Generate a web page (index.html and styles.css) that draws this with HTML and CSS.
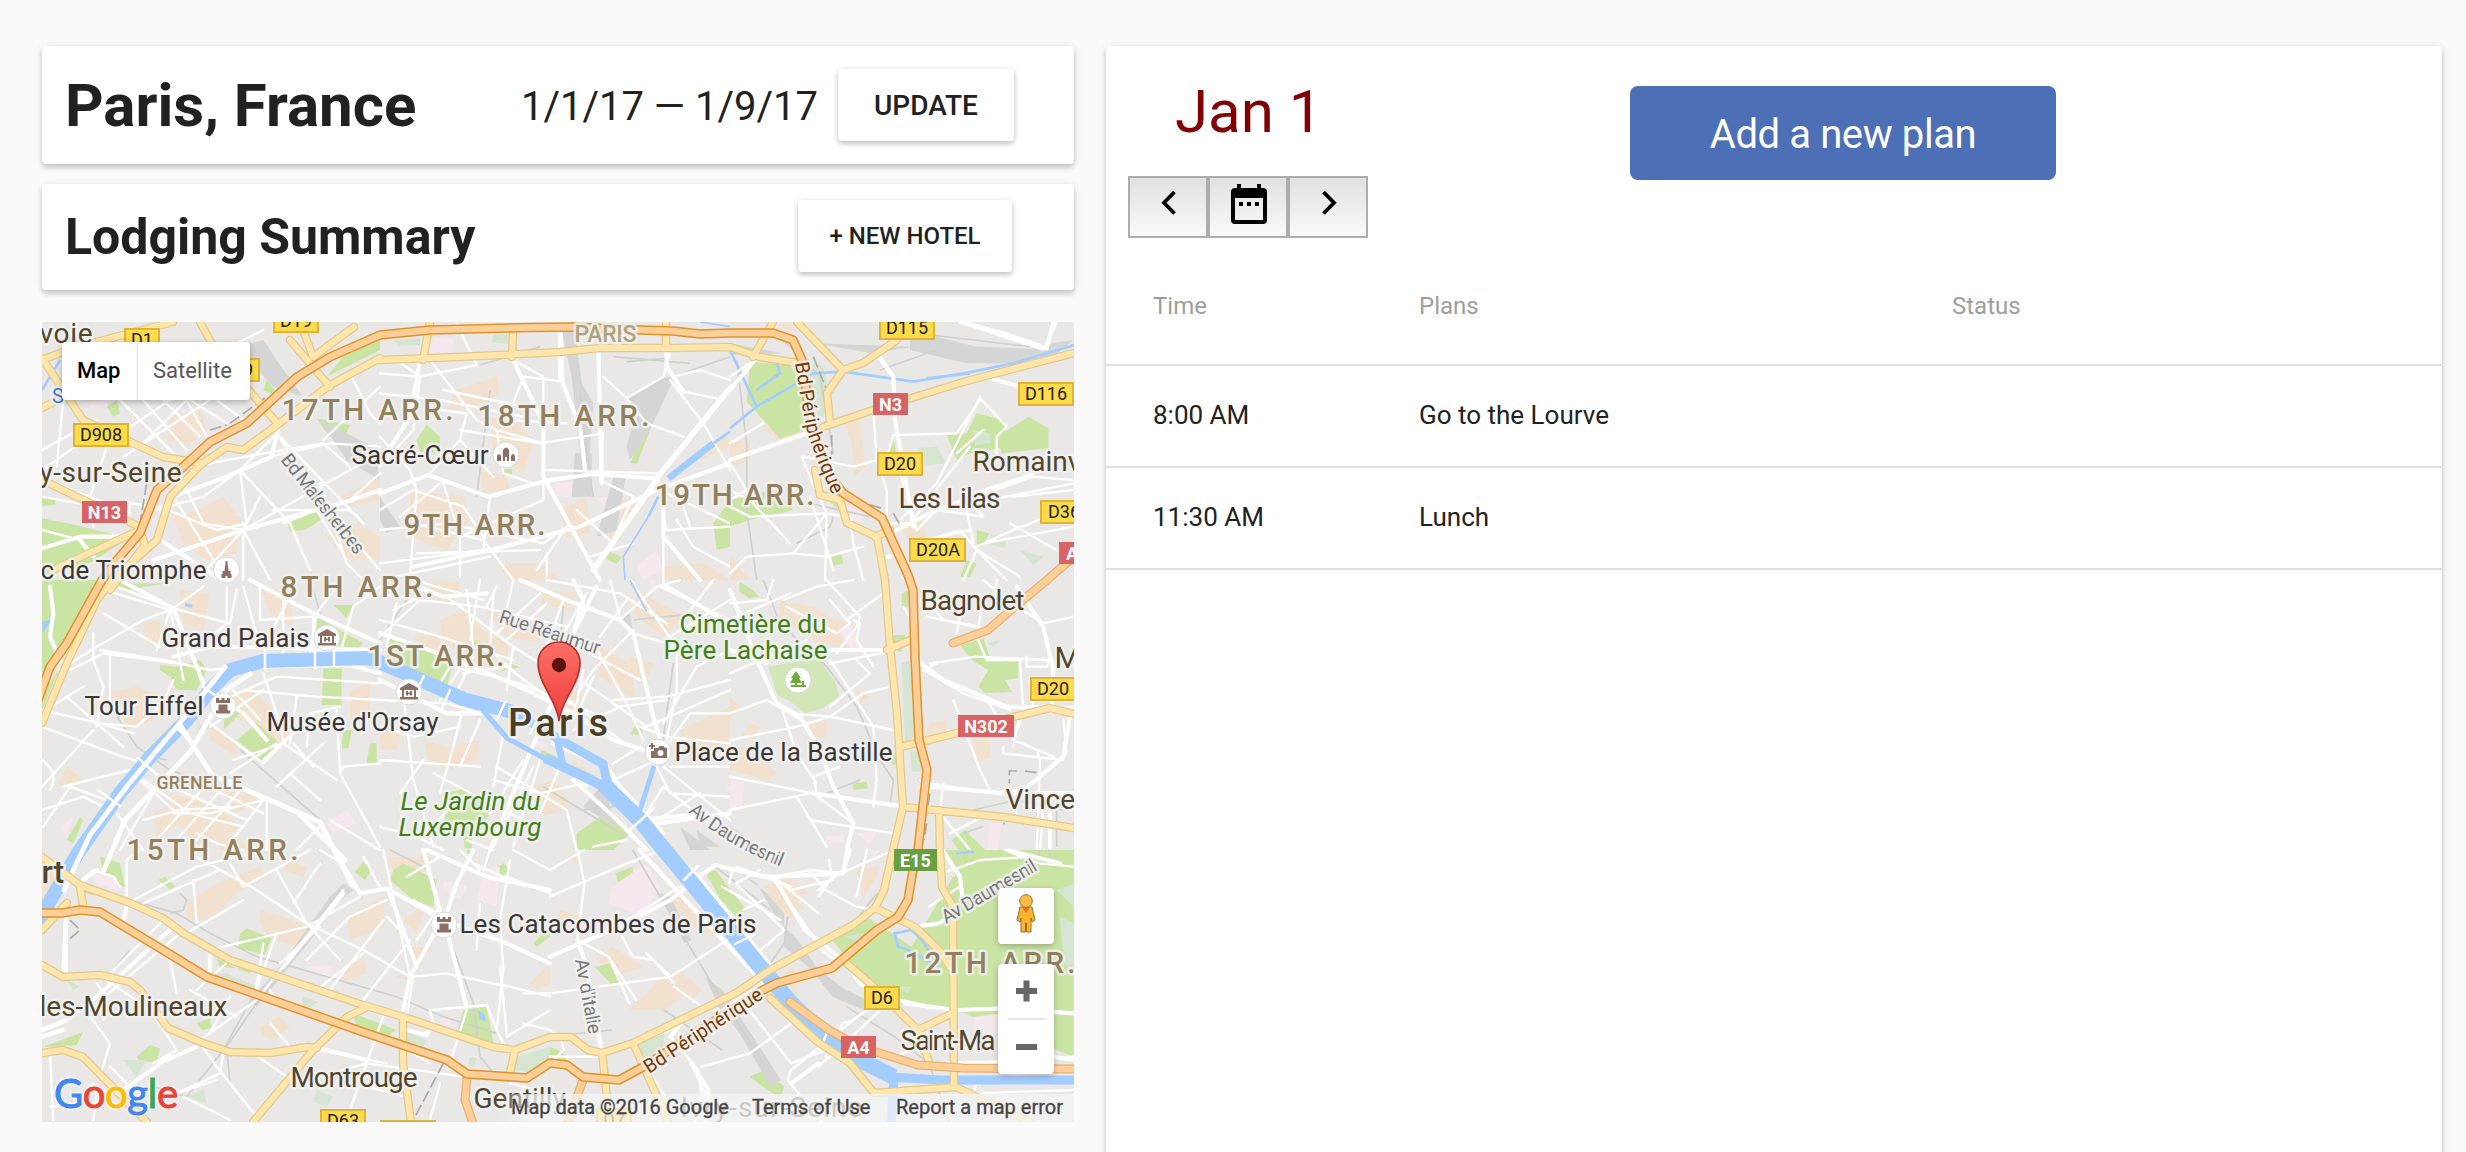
FILE: index.html
```html
<!DOCTYPE html>
<html lang="en">
<head>
<meta charset="utf-8">
<title>Paris, France</title>
<link rel="stylesheet" href="styles.css">
</head>
<body>
<main class="page">
  <section class="left">
    <header class="card trip">
      <h1>Paris, France</h1>
      <span class="dates">1/1/17 — 1/9/17</span>
      <button class="btn update">UPDATE</button>
    </header>
    <header class="card lodging">
      <h2>Lodging Summary</h2>
      <button class="btn hotel">+ NEW HOTEL</button>
    </header>
    <div class="map">
      <svg class="canvas" viewBox="42 322 1032 800" width="1032" height="800">
        <defs>
          <g id="castle"><circle r="13" class="disc"/><path d="M-7-8h3v2h2.500v-2h3v2h2.500v-2h3v5h-14zM-4.500-1.500h9v6h2.500v3h-14v-3h2.500z"/></g>
          <g id="museum"><circle r="13" class="disc"/><path d="M0-9 9-4v2h-18v-2zM-7-2h2v7h10v-7h2v7h2v2.500h-18v-2.500h2zM-3-1h2v1.500h2v-1.500h2v4.500h-2v-1.500h-2v1.500h-2z"/></g>
          <path id="arterial" d="M380 358L330 385 277 425 243 450 227 447 200 465 170 497 157 540 112 580 97 600 67 663 42 723M380 360L457 357 560 352 600 348 667 348 730 347 760 357 797 363M815 470L820 495 840 500 847 523 877 537 885 580 890 647 897 713 903 807 893 850 884 890 875 908 853 925 770 970 736 993 633 1043 602 1053 588 1050 571 1037 550 1037 515 1050 493 1047 407 1018 363 1005 230 960 183 933 163 918 130 903 80 885 42 857M1074 353L963 382 873 410 823 427M797 322L843 370 827 393 830 423M843 370L863 363 897 340M900 747L917 743 957 733 1013 717 1050 708 1074 714M903 807L1003 817 1074 828M939 810L940 850 942 887 953 907 954 1083M875 908L915 927 939 950 950 967M843 960L874 987 918 1030 953 1013M918 1030L930 1065M770 998L819 1043 850 1063 874 1093 956 1087 1005 1110 1030 1122M633 1043L660 1103 668 1122M602 1053L607 1097 610 1122M887 650L910 640M42 965L63 977 100 975 130 982 140 990 168 1028 203 1043 230 1052 270 1053 307 1047 317 1048M367 1007L347 1017 313 1050 253 1122M403 1020L403 1063 411 1122M42 1053L63 1050 83 1057 147 1122M515 1050L510 1073M80 887L83 905M42 930L67 903M42 360L73 348 173 322M42 408L80 388M42 358L83 420 163 457 200 463M200 322L217 353 277 423M290 340L330 387M354 327L313 357 303 330M42 480L140 527M430 322L423 360M513 333L512 357M666 322V348M773 322L753 357M875 537L890 530M52 570L140 530 145 545 110 590"/>
          <path id="motorway" d="M953 643L988 630 1017 605 1047 580 1078 553M790 1002L829 1030 860 1047 918 1065 963 1068 1078 1069M467 1077L465 1100 474 1126M583 1080L567 1126"/>
          <path id="ring" d="M38 700L50 667 67 643 102 580 117 560 140 533 157 490 182 468 210 442 247 423 297 377 330 357 380 335 430 330 530 327.500 573 327 640 330 673 331 700 334 730 333 773 333 793 340 802 360 808 403 813 427 825 470 843 493 882 518 908 575 913 590 915 657 919 740 927 770 918 850 913 870 908 900 898 917 877 930 832 968 777 983 763 990 643 1067 619 1080 583 1077 567 1065 550 1063 527 1078 467 1074 447 1060 363 1032 207 977 163 950 100 912 80 910 62 913 36 913"/>
        </defs>

        <!-- north-west -->
        <g transform="translate(30 310) scale(.33333)">
          <path class="t" d="M420 320l90-20 20 60-60 50-60-20zM430 620l110-30 90 30-10 110-90 20-70-50zM520 590l60-30 40 50-50 30zM890 680l90-40 70 40v70h-100zM930 560l120-60v70l-90 20zM320 190l60-30 40 40-60 30z"/>
          <path class="g" d="M36 625l100 20 160 40-110 70-150 50zM770 630l90-28 25 20-60 38-45 4zM860 325l100 20-30 70-50-60zM700 240l60 30-50-60zM940 140l110-60v40l-160 80zM230 290l30-20 10 40-20 10zM36 560l40 10v14l-40 4z"/>
          <path class="r" d="M620 110l80-20 60 90 60 80-90-30zM870 330l160 80 20 100-100-60z"/>
          <path class="k" d="M160 280l70-10 5 15-50 10z"/>
          <path class="v" d="M36 240L90 150M230 95L330 62 420 40"/>
          <path class="w" d="M230 400L520 200M280 440L600 230M340 400L470 270 530 380M270 270L430 430M330 260L470 420M400 270L510 380M560 270L640 330M480 270L590 340M100 270l-20 200M230 410L180 560 190 650M150 400L36 480M370 130L510 270M300 70L500 180M36 420L200 330M620 100L700 60M80 520L300 610M630 480L740 370 800 460 860 560 1050 780M630 480L520 560 380 600M630 480L780 640 840 780M630 480L650 640 560 660 390 590M430 560L590 810M640 660L870 530 1050 430M430 480L700 430 880 400 960 470M740 370L1000 640M870 520L950 760 1000 810M960 570L1050 490M690 560L640 660 720 810M760 640L860 600 950 750M640 660L640 810M640 660L500 810M450 500L520 640 640 660M720 440L900 400 1050 410M960 190L1020 310 1050 340M880 390L1050 230M36 660L150 690M290 640L300 580 380 590M36 560L250 600M730 600L960 600"/>
          <path class="m" d="M36 715L150 680 290 680M640 660L960 572 1050 540M745 350L725 440 590 500 430 560M640 660L370 750M390 690L560 800M150 690L190 740M600 120L690 200"/>
          <path class="d" d="M600 340L710 260M350 520L330 640M540 360l50-15"/>
        </g>
        <!-- north -->
        <g transform="translate(380 310) scale(.33333)">
          <path class="t" d="M230 240l120-40 10 50-70 40-90 10zM330 320l90 20 40 60-30 90-90-50zM90 540l160 20 20 70-70 90-110-40zM540 600l80-40 10 110-70 10zM690 580l80-20-10 70-50 70-50-40zM300 480l80 20 10 40-80 10zM360 760l120 0 60 50h-160zM850 770l120-10 80 50h-200zM940 430l100-60 10 40-90 40z"/>
          <path class="g" d="M110 390l30-45 40 35v50l-60-5zM790 362l18 5-38 95-18-3zM370 480l28-4-4 20-26 2zM690 725l35 15-15 22-32-15zM1000 640l50-70v140l-40 10z"/><path class="gg" d="M40 90l80-5v20l-60 2zM340 75l45-3v30l-50-6z"/>
          <path class="k" d="M160 85l60 0v40l-70 5zM520 520l65-8-8 50-50-4zM650 565l40-6-20 30zM770 770l60-50 20 60-60 30z"/>
          <path class="r" d="M545 60h40l20 160 35 60-10 150-30 0-25-230zM850 200l30 10-70 150-60 90-10-40 30-120-30-30zM585 430h50v130h-60zM700 500l40-20-30 180-60 20zM0 560l60 90-40 20-20-40z"/>
          <path class="rl" d="M600 250L630 500M620 440L640 560M850 210L1050 140M700 140l230 20M740 155l120-10M300 165L480 110M290 560L330 240"/>
          <path class="w" d="M0 190L120 200 290 165 230 40M0 250L180 270 430 320M50 150L120 200 100 360 0 470M150 150L290 330 350 360 490 400M490 570V200L400 150M430 200L380 330M430 200L550 215 545 60M190 240L480 300M240 360L480 400 670 370M180 300L260 310 240 390 340 500M600 340L620 490M500 480L830 490M670 200L740 265 850 200 870 130M740 265L800 340 910 380M870 210L970 340 1050 480M880 200L960 180 1050 210M910 245L1010 265M850 620L860 660 1050 650M860 550L1050 640M0 380L90 480 110 540 90 800M0 600L100 540 250 590 310 680M190 520L240 680 240 800M330 560L310 720 0 760M490 700L560 650 470 780M350 360L370 490 460 520M850 820V560M700 690L760 560 660 510M630 740L760 700M930 650L900 560M890 630L940 710 1050 770M60 620L180 520M0 660L200 640 490 700M400 810L310 690 100 640M240 680L490 570M110 730L480 720M500 730V800M590 600L700 700M380 330L560 340M240 390L150 490M0 810L330 740"/>
          <path class="m" d="M0 550L145 495 325 560 500 512 640 492 830 505M395 140L490 340V500L660 810M540 50V200L600 350 615 480M655 120L665 520 665 370M100 770L330 720 600 650 830 540 1050 460M860 120L860 170 910 245M120 150L90 320 20 430M850 540L850 680 960 810"/>
          <path class="b" d="M830 505L1050 235M830 510L640 780"/>
          <path class="v2" d="M865 505L1000 400"/><path class="v" d="M1000 400L1050 365M835 560L805 620"/><path class="vt" d="M805 620L730 740 735 810M960 36L1050 50"/>
        </g>
        <!-- north-east -->
        <g transform="translate(730 310) scale(.33333)">
          <path class="t" d="M330 310l60 20 15 140-30 30-10-100zM100 360l110-40 10 60-70 10zM0 740l60 70H0zM510 650l60-40 20 80-50 10zM140 40l50 0v30zM0 400l60-10v60L0 470z"/>
          <path class="g" d="M60 155l120 10 40 70 20 120-90 30-100-110zM650 375l60-5 30-60 80 20 20 80-120 20-40 20zM800 380l50-30 45-30 60 35v60l-140 15zM740 660l38 10-20 40-18-4zM690 800l20-50 30 10-20 40zM305 740l30-6 5 26-30 8zM0 570l130-30 60 60-130 30-60 20zM490 375l10 60-30-10zM270 545l60 0-10 50z"/><path class="gg" d="M230 150l50 20 20 80-20 70-40-20zM560 415l60-5 30 50-60 5zM730 360l50 10 5 30-50 5zM780 670l50 20-5 25-40-10zM870 720l70 20-30 25zM380 370l10 80"/>
          <path class="k" d="M340 580l60 30-20 40-40-10z"/>
          <path class="r" d="M540 60l200 50 250 10-80 40-200 0-170-40zM250 100l300 10-120 20zM0 100l160 30-150 5zM900 110l130-20-70 60z"/><path class="rl" d="M20 150L50 400 50 600 80 810M560 70L900 110M450 180L620 120M120 50L270 200 310 430M200 700L300 650 310 620M240 580L420 620"/>
          <path class="v" d="M0 355L80 290 250 190 340 185 550 215 700 190 850 160 1032 105M0 120L80 290M80 240L150 190 140 160"/><path class="v" d="M590 205l130-15"/>
          <path class="w" d="M0 400L100 340M215 440L240 500 290 610 190 730 50 740 0 790M0 590L60 620 290 610 350 620M190 730L290 740 400 710M290 610L285 810M0 540L60 570 180 700M360 620L370 700 400 810M430 300L440 450 370 470 220 440M440 450L470 540 470 640 540 640M490 380L460 470M490 375L680 370 750 270M510 630L620 520 750 260M750 265L830 350 800 380 800 430M680 430L760 360M530 530L560 660 620 600 760 620 700 560 940 480M620 600L1032 520M540 640L720 410M900 500L1032 510M560 700L690 660 740 720 700 810M590 690L720 660M740 710L850 660 1000 600M740 720L870 800M700 550L730 700M700 40L940 120 980 40M1032 540L850 560M760 700L1032 650M840 640L980 720M240 560L310 780M0 200L60 160M0 460L50 540 0 570M500 450L530 560M740 720L830 810"/>
          <path class="m" d="M440 130L490 200 495 330 515 440 550 650M0 450L230 370M500 660L620 600 900 500M780 205L870 230M690 36L820 70 950 115 970 40M0 240L70 155M480 740L440 740"/>
          <path class="d" d="M250 140l40 100M305 375v60M490 610l20 35M375 570l80 25"/>
        </g>
        <!-- west -->
        <g transform="translate(30 580) scale(.33333)">
          <path class="t" d="M230 340l90-20 80 30-30 70-80 30-20-70-60 0zM600 340l70-10 70 70 50 80-70 0-130-90zM450 30l90 10-20 110-60-20zM690 20l90 20 10 100-70-40zM960 340l60-40v120l-60 10zM540 440l80 40 0 50-80-50zM420 640l150 40 60 60-110 70-90-90zM110 560l50 40-80 20zM370 700l70-40 20 60-80 60zM540 770l90 0 20 40h-80zM570 630l120 20-70 50zM340 130l50-10 10 70-50 10z"/>
          <path class="g" d="M36 0h170l-90 160-80 120zM390 255l50 5 70-20 20 30-30 60-60 0-20-40-30-20zM590 350l50 40-60 60zM620 480l60-50 75 65-55 50zM860 110l140 80-30 30-110-60zM880 265h55v110h-60zM940 450h25l-10 55h-20zM1020 490h20v60h-30zM150 710l-40 70 20 10 30-70zM36 340l50-70-50 120zM910 75l60 0-20 40zM220 10l190 0-120 20z"/><path class="gg" d="M500 440l40-20 15 20-40 20z"/>
          <path class="k" d="M890 730l60-40 30 40-70 30zM90 740l40-30-20 60z"/>
          <path class="vf" d="M36 125l30-6-28 40zM466 70l22 4-2 9-22-4z"/>
          <path class="rl" d="M235 370L320 500 420 570 480 590M630 510L870 720M840 0L920 260M360 530l50 10"/>
          <path class="w" d="M190 20L420 90 380 210M220 100L390 200M260 20L430 85 600 130M420 80L460 300M430 85L520 20M420 90L340 120 200 200 90 270M590 20V130L530 180M620 30L600 130M640 20L690 200M120 270L220 220 440 250M190 160V240L220 320 200 440M36 390L210 430 310 460M210 430L320 440 400 370 430 300M110 350L280 500M36 440L250 520 340 550M210 210L400 240 540 270 630 260M240 230L240 400M36 620L190 450M100 620L340 560M690 20L690 120 850 110 850 220M700 200L780 50M760 230V20M930 220L970 80 1050 20M600 320L690 420M540 440L700 330M600 350L740 290 1050 310M640 330L860 350 1050 360M800 350L780 490M700 280L740 400 760 480M540 430L700 550M700 550L850 400M610 540L760 490 920 600M600 580L740 490M700 540L830 420M780 580L870 660M740 620L880 490M930 580L940 560 1050 550M920 380L930 580 1050 800M830 500L840 400 930 380M340 600L480 700 640 740M430 690L330 600M370 640L270 810M400 610L650 720M490 600L700 700M550 590L380 780M600 600L430 790M640 620L500 780M700 660L600 790M340 720L450 690 600 680M260 700L340 810M500 760L560 790 640 810M710 660V810M36 690L160 650 240 690M36 540Q90 580 60 630M40 740L120 620 230 660M36 400L110 350 160 320M430 700L540 700 700 660M870 740L800 810M900 720L1050 810M790 490L850 560M920 20L860 100 840 220"/>
          <path class="m" d="M270 0L430 85 520 310M60 20L70 100 60 170 90 240 110 260M660 0L850 100 1050 190M430 230L580 190M640 260L960 255 1050 280M560 200L1050 210M520 310L640 400 710 480"/>
        </g>
        <!-- centre -->
        <g transform="translate(380 580) scale(.33333)">
          <path class="t" d="M180 120l80-30 50 60 80 40-20 80-80-20-100-60zM310 80l150 50 20 60-100-20zM640 190l110 60 20 110-110-70zM770 30l140 80-60 60-90-70zM200 500l100-20-10 60-80 20zM0 440l70 10-20 60H0zM460 620l60-20 60 80-90 30zM540 320l80 30-50 60zM900 450l150-70v120l-120 30zM750 230l70 20-20 60-60-40zM580 540l70 50-80-20zM100 170l60-10 60 70-40 20zM160 0l80 10-20 60-80-10zM500 30l90 10-20 50-90-20zM130 480l70 20 20 70-70-20z"/>
          <path class="g" d="M30 170l30 5 160 75-20 70-180-70zM280 178l25 10 40 70-55-20zM195 640l60-15 40 20 30 50 0 20-50 20v70h-20l-10-60-50-10zM590 760l100-70 60 70-50 50h-110zM765 438h20v28l-32-4zM485 510l45 20 0 20-50-18zM390 250l30 12-60 12z"/>
          <path class="k" d="M460 480l30 5 0 20-30-5zM800 0h30l-10 20zM1040 620l10-5v30z"/>
          <path class="r" d="M900 740l40 30 50 40h-60zM950 750l70 50h-60zM670 610l-60 70 100 60zM720 110l40 60-10-70z"/>
          <path class="rl" d="M490 620L740 770M610 690L700 680 660 600M880 250L840 550M0 180L120 0M550 80L540 180M760 120L950 100"/>
          <path class="w" d="M0 40L120 60 300 80 560 140M50 70L20 200M260 30L280 200 180 360M300 0L270 180M340 40L330 210M0 120L180 170 400 240M120 60L0 170M200 50L400 200 480 250M100 0L310 60M480 40L350 160M550 60L500 200M400 0L370 130M500 70L380 180M350 20L320 80M240 210L180 310M280 230L220 360M220 260L420 310 640 400M400 200L380 330M250 280L380 260 540 380M0 360L200 370 300 400M70 340L100 600 160 800M250 380L220 500 180 640M300 420L240 560M370 460L340 620M0 540L300 560M0 440L100 470 240 440M480 540L400 800M460 560L340 800M430 540L330 700M540 560L480 700M130 540L60 640M0 740L110 770 190 810M160 580L350 680 430 720M350 560L560 690 590 810M620 620L560 560M340 600L480 640 610 610 690 630M600 380L640 290M580 450L720 380 860 360M540 340L720 480M600 300L800 440 1050 330M610 270L580 420M640 190L740 370 790 480M700 360L860 350 1050 300M760 150L640 270 600 330M780 300L590 200M720 120L830 20 900 0M620 40L540 180M690 0L720 110M870 170L1050 60M760 160L890 200 890 340M880 190L820 100 750 0M890 330L850 530M850 430L950 260 1050 210M870 560L1050 560M850 560L1050 720M830 540L930 400 1050 400M830 560L870 640 1050 650M700 600L830 540M500 0L720 40 860 130M700 550L780 500M800 700L850 620 1050 780M780 440L860 470 1050 490M100 60L40 90M330 210L430 300M270 200L260 260M840 20L1050 120M900 130L1000 0M640 800L740 780M740 60L660 170M800 740L960 640M240 650L140 760M260 780L340 810"/>
          <path class="m" d="M0 160L120 200 280 260 440 330 580 400 700 480 820 520M0 300L200 400 320 400M580 0L610 60 520 360 470 470 400 640 330 810M420 0L560 60 720 120 760 160 820 410 850 510M520 490L680 560 720 620 850 760M580 600L690 700 800 810M650 20L540 240M800 735L1050 700M780 720L980 700M320 40L190 50 110 20M860 20L1050 130"/>
          <path class="vt" d="M750 0L800 95"/>
        </g>
        <!-- east -->
        <g transform="translate(730 580) scale(.33333)">
          <path class="t" d="M150 60l100 20 60 40 70 10-20 80-90-20-120-70zM600 430l50-10v40l-40 10-30 10zM730 480l50-5 0 60-40 10zM0 500l70 0 70 80-30 20-110-30zM60 430l30 10-20 40-40-5zM230 440l60-20 0 50-50 10zM370 320l50 30-30 20zM0 350v60l40-20z"/>
          <path class="g" d="M28 5l40 25 20 20-30 5-30-20zM690 195l70-20 25 70 80-10v60l-40 5 20 35-80 5-20-20 30-50-50-30zM485 165h40l-10 50h-30zM515 40l20-10v50h-20zM370 610l40-5 5 20-45 5zM665 780l40-30 60 60h-80zM485 520l15-4-2 40-14-4z"/><path class="gg2" d="M115 260l80-15 70-10 50 70 12 45-50 35-50 15-45-35-40-20z"/><path class="gg" d="M515 250l30-10 10 230-30 20zM540 515h25l10 60h-30zM770 190l40-10-20 20z"/>
          <path class="k" d="M330 160l30-30 30 60-20 30zM0 600l45 5-10 80H0zM780 730l35 0-10 80h-35zM380 760l60-5-20 40zM290 770l50-5v20l-50 5z"/>
          <path class="rl" d="M100 0L150 130 290 260 380 380 450 540 490 600 480 680M0 740L100 810M390 600L290 640M730 690L860 660 1000 690M700 760L760 740M920 700v110M980 690v110"/>
          <path class="w" d="M0 70L110 60 130 0M180 40L0 120M160 60L260 20 370 0M170 80L320 160 360 130 300 60M290 0L390 110 380 140 320 220M350 120L460 40M370 120L390 130 380 180 430 260M0 280L230 180M0 400L110 360 180 400M150 370L200 520 260 610M0 480L200 440 300 410 400 340 480 320M230 430L180 400 300 410 490 450M300 250L500 210M380 240L420 280 300 380M300 240L340 300 430 440 440 600 430 680M0 590L250 640M260 640L250 590 330 560M250 640L370 730 350 810M200 650L290 800M240 720L490 760M0 690L240 640M520 80L550 130M580 50L640 120 750 140M700 60L680 160M590 110L780 150M760 60L740 170 770 240M600 250L740 230 950 240M770 240L870 240 880 400M760 0L830 60 940 130 1032 110M890 230L890 260 950 260 960 230M670 360L750 570 780 630M770 360L810 420 940 380M820 500L820 520 1000 540M600 610L790 640 870 640M630 700L720 810M660 760L760 710M880 400L850 480 970 530M870 400L850 500M920 510L930 540 920 810M1000 420L1010 520 870 640M570 600L600 620V700M640 610L630 690M860 630L780 640M830 640L860 700M940 680L930 810M900 300L910 380M580 270L700 340 840 390M600 260L620 250 600 250M800 0L790 90"/>
          <path class="m" d="M0 30L90 260 140 370 210 410 270 510 310 620 370 730 350 810M280 210L470 210M110 250L0 210M560 240L640 300 830 380 1032 385M860 20L940 140 970 270 965 390M250 640L520 680M600 620L830 640 1032 640M1020 410L1000 530 870 640M960 700V800"/>
          <path class="d" d="M860 573h-22v37M885 573l35 5M600 640l-6 40M590 730l-8 50M820 730l5 0"/>
        </g>
        <!-- south-west -->
        <g transform="translate(30 850) scale(.33333)">
          <path class="t" d="M470 160l90-60 130-50 20 30-90 50-80 80-70 0zM690 180l70 20 100 40-50 50-90-20-30-50zM690 530l60-30 30 30-50 40-30-10zM950 200l110-60v90l-100 40zM1120 210l70-50-30 90zM1140 290l70 0-60 60zM940 350l60-30 10 50-80 30zM1080 20l130 0-30 50-110-20zM40 20l50 20-20 120-34 10zM770 30l60 20-10 30-60-20zM1500 400l60-60v60l-40 20zM1100 380l50-20 0 40z"/>
          <path class="g" d="M1090 60l30-20 100 50-10 80-60-20-70-60zM630 250l20-15 75 30-20 50-80-20zM560 325l60 30-50-5zM620 340l60 0-20 30-30-10zM975 65l25-30 25 25-20 30zM1300 480l70-10 20 110-110-30zM970 490l130 50-30 20-90-30zM40 590l120-45-20 40-60 5zM320 620l40-35 30 10-10 40-50 0zM210 20l60 20 15 70-60-10zM385 90l20-10 30 30-15 8zM500 520l40-15 5 30-30 5zM160 110l60 30-60-10zM1390 60l30-20 20 20-40 30zM1310 0h20l-10 30zM1510 280l50-50v30l-40 30z"/><path class="gg" d="M540 370l50 0 90 40-10 10-90-20zM1120 540l70 30-10 20-60-15zM820 440l45 15-30 20-20-15zM1460 620l100-30v40l-50 40-60-10zM110 390l40 20-20 10zM860 720l50 20-20 30-40-15zM470 740l50-20 10 40zM1320 620l20 5-5 25-20-5zM280 630l70 0-30 50z"/>
          <path class="k" d="M180 60l80 20 0 40-60-15zM1240 90l70 20-20 40-50-30zM1360 60l50-10-10 120-60-20zM820 350l80-5 30 40-40 0zM1235 500l30 0-5 25-25-5z"/>
          <path class="vf" d="M1345 480l20 15 2 20-18-8zM674 275l10 2v4z"/>
          <path class="r" d="M900 140l40-40 30 20-60 50-60 90-80 100-90 110-20-20 90-100z"/>
          <path class="rl" d="M300 150L440 190 540 250 680 320 1100 440 1240 500 1400 550M680 420L580 600 470 740 370 710M1200 60L1080 0M1250 240L1330 460 1350 620 1400 680M700 430L590 590 600 700M230 380L300 300M450 130l20 20-10 30-40 10"/>
          <path class="w" d="M310 150L500 50 700 0M290 150L290 30 330 0M340 160L570 60M480 10L680 120 830 220 1000 300 1140 380M490 90L500 220M600 40L640 110 840 0M740 60L830 220 930 330M640 150L470 250M540 300L830 230 990 140M790 160L870 40M750 340L870 230M830 330L960 200 1070 150M900 420L1060 210M1070 200L1110 240M1000 450L1140 270M860 420L1000 310M420 330L440 430M110 180L110 370M500 420L600 330M400 210L240 370M450 250L200 460M700 360L740 250M700 280L680 420M720 420L740 460M600 440L540 550M480 420L620 500M230 390L360 480 440 600 370 640M200 400L230 440 220 510M180 500L240 580 210 680M160 90L190 60 250 80 270 110M510 570L680 450 940 120M510 580L560 650 680 800M580 610L570 670 420 740M820 580L870 600 1070 640M780 590L720 520M670 610L770 680M870 680L1010 640 1300 680M960 780L1060 500M1150 150L1240 200M1000 20L1050 110M1060 0L1110 240 1140 380M920 30L870 0M1250 370L1150 380M1250 370L1430 410M1350 160L1340 300M1440 30L1410 210 1420 360 1400 540M1430 80L1560 130M1410 350L1430 550M1480 430L1560 430M1400 400L1560 440M1210 480L1370 465 1400 540 1430 600M1310 480L1260 640M1430 560L1560 480M1480 520L1560 540M1130 500L1150 380M1230 20L1130 80M1290 0L1350 60M1450 0L1560 60M1330 40L1440 90M1130 600L1200 640M970 700L1130 740M1230 700L1200 810M440 730L560 690M60 610L70 810M200 720L190 810M460 740L600 810M1440 700L1560 730M60 770L140 760 190 700M240 650L290 700M1160 270L1230 170M1200 480L1210 520M1360 60L1380 0"/>
          <path class="m" d="M36 540L110 510 200 440 430 230M110 160L100 370M290 160L280 230M200 60L160 90M420 620L280 720M930 30L990 130 1070 115 1240 210M1120 480L1140 380 1230 220M1075 120L1160 350M1240 220L1280 100 1330 0M1240 210L1430 280 1560 340M1250 240L1310 470M540 290V370M870 595L1010 630M1130 540L1190 555 1200 535M1180 0L1240 220M410 630L500 590M36 560L100 540M690 360L680 420M1190 0L1370 80 1560 120M940 130L760 350"/>
          <path class="d" d="M1240 640L1150 810M120 210l30 30-40 35"/>
        </g>
        <!-- south-east -->
        <g transform="translate(550 850) scale(.34444 .33333)">
          <path class="t" d="M620 110l70-30 60 50-40 20 30 20-50 40zM340 130l50 0 90 130-50-20-80-80zM320 380l60-20 30 60-80 60-100 0 60-60zM250 60l30-20 20 40-30 30zM30 180l60 20-80 20zM400 380l40 40-30 30-70-50zM440 130l50 20-30 20zM680 370l30-20 10 110zM890 60l60-10v30l-40 60zM180 290l90 60-60 20-80-40zM40 30l40-20 0 30z"/>
          <path class="g" d="M450 70l30-10 60 80 30 40-30 20-50-60-20-40zM1170 80l350-80v620l-340-140-220-20-140-190 100-70 130 90zM1180 0h342v100h-330zM190 70l50-20 0 100-30-10zM130 350l50-10 30 60-30 5zM580 680l40-20 60 50-10 30-40-20zM0 590l40 20 20 50-60-20zM1140 0h60l-20 80z"/><path class="gg" d="M1480 200l42 20v170l-30-60zM1470 120l52-20v70zM250 580l80-30v40l-60 40zM1010 410l40 0-10 20zM860 260l40-10 0 30z"/>
          <path class="k" d="M180 110l100-70 40 70-50 90-100-40zM1230 500l90-10v60l-90 0zM930 0l30 0-20 30zM1230 580l70 30-70-5z"/>
          <path class="r" d="M540 60l60 40 60 110 60 60 60 90 80 60 80 40-30 20-90-40-60-80-80-70 0-100-50-60zM320 130l30 10 60 130-20 10zM450 380l50 40 90 140 80 130-30 20-90-160-60-80z"/>
          <path class="rl" d="M480 50L640 180M240 0L400 280 470 400 620 640M690 200L680 280 640 340M950 130L880 220M0 560L180 540M330 480L500 600M1100 640L1160 816M860 470L1000 560 1100 640M1420 0v30M1450 0v30"/>
          <path class="v" d="M1050 240L1000 250 1010 290 1040 300 1130 350 1080 270 1050 240M1180 10l50-5"/>
          <path class="w" d="M0 60L100 0M0 140L200 50 300 10M80 260L100 100 80 0M80 270L170 320 250 450M0 320L160 250 240 200 470 50M0 430L350 380 530 260M200 240L240 320 300 330 360 400M350 380L280 310M170 320L230 460M360 410L440 470M520 100L530 60 650 80 760 60 850 70 860 0M610 60L540 100 680 240 600 310M420 110L600 330M500 110L670 210M750 60L800 120 890 170 940 180M660 90L700 120 820 90 810 30M650 90L790 300 850 350M540 50L620 80 700 110M780 140L820 80 1000 0M890 140L920 0M560 180L620 150M870 0L850 60 780 120M780 190L660 90M380 600L500 480 620 400M100 420L150 600M350 560L430 660 450 816M540 430L700 640 900 560M0 540L30 560 40 600 0 640M700 520L580 610 440 650M410 640L450 730 420 816M700 660L690 690 790 816M700 660L880 510 920 480M880 510L850 520 800 620M240 580L350 540 380 520M1240 690L1230 730 1522 720M1190 700L1522 650M1200 640L1522 620M1000 620L1100 580M780 650L960 480M240 580L340 750 350 816M1190 110L1100 170M1140 70L1250 30 1400 20M1320 0L1420 40 1522 50M150 620L0 620"/>
          <path class="m" d="M0 320L200 230 350 150 480 45M480 45L620 80 660 80 850 70 870 0M80 270L100 330 150 600M260 0L420 180 620 400M340 0L430 80 650 360M580 400L620 380M650 80L740 240 860 340 900 400 960 440 1100 470M1030 460L1180 480 1320 475 1522 490M1320 600L1522 630M1160 640L1310 640M1000 680L960 660 880 620M780 640L700 700M1060 230L1130 220 1180 190M350 560L380 520M1140 0L1190 80 1200 160M1330 0L1480 40M410 640L460 720 450 816"/>
        </g>

        <!-- the Seine and its canals -->
        <g class="river">
          <path stroke-width="14" d="M36 925L78 853 120 793 150 757 187 720 210 690 230 670 263 661 370 658 423 681 463 699 513 712"/>
          <path stroke-width="9" d="M513 712L557 738 603 764 608 786"/>
          <path stroke-width="5" d="M480 707L507 738 547 760"/><path stroke-width="7" d="M557 738L564 770"/>
          <path stroke-width="10" d="M545 758L587 778 610 790"/>
          <path stroke-width="16" d="M604 785L640 820 661 846 695 887 757 963 791 1003 832 1043 860 1060 894 1077"/>
          <path stroke-width="9" d="M890 1077L940 1080 1074 1080M894 1077L891 1122"/>
          <path stroke-width="5" d="M654 766L648 785 640 810"/>
        </g>
        <path class="bridge" d="M98 790l22 16M138 758l25 22M176 727l20 20M202 686l14 10M265 650v20M315 652v16M334 650v16M424 676l-8 16M450 690l-8 18M505 702l-8 18M536 722l-6 12M630 830l24-22M684 880l14-14M735 944l20-10M820 1050l8-20"/>
        <path class="b1" d="M64 890L90 835 128 785 178 725 225 667M104 870L125 820 190 752 226 690 250 674M180 725L212 775 320 822M320 822L352 885M345 860L300 815"/>

        <!-- arterial roads, motorways and the ring road -->
        <use href="#arterial" class="yc"/><use href="#arterial" class="yf"/>
        <use href="#motorway" class="ac"/><use href="#motorway" class="af"/>
        <use href="#ring" class="pc"/><use href="#ring" class="pf"/>

        <g transform="translate(-1.500 0)">
        <!-- districts -->
        <g class="arr">
          <text x="283" y="419.500" textLength="172">17TH ARR.</text><text x="479" y="425.500" textLength="172">18TH ARR.</text>
          <text x="656" y="504.500" textLength="160">19TH ARR.</text><text x="405" y="534.500" textLength="142">9TH ARR.</text>
          <text x="282" y="597" textLength="153">8TH ARR.</text><text x="369" y="666" textLength="137">1ST ARR.</text>
          <text x="128" y="860" textLength="172">15TH ARR.</text><text x="906" y="973" textLength="171">12TH ARR.</text>
        </g>
        <text class="lb paris-n" x="576" y="342" textLength="62">PARIS</text>
        <text class="lb gren" x="158" y="789" textLength="86">GRENELLE</text>
        <!-- towns -->
        <g class="town">
          <text x="41" y="343" textLength="53">voie</text><text x="41" y="482" textLength="142">y-sur-Seine</text>
          <text x="41" y="1016" textLength="188">les-Moulineaux</text><text x="292" y="1087" textLength="127">Montrouge</text>
          <text x="475" y="1108">Gentilly</text><text x="682" y="1117" textLength="182">Ivry-sur-Seine</text>
          <text x="974" y="470.500">Romainville</text><text x="900" y="507.500" textLength="102">Les Lilas</text><text x="922" y="609.500" textLength="104">Bagnolet</text>
          <text x="1056" y="668" font-size="30">Montreuil</text><text x="1007" y="809">Vincennes</text><text x="902" y="1050" textLength="95">Saint-Ma</text>
          <text x="43" y="883" font-size="32" font-weight="500">rt</text>
        </g>
        <text class="lb paris" x="509.500" y="736" textLength="100">Paris</text>
        <!-- places -->
        <g class="poi">
          <text x="42" y="578.500" textLength="166">c de Triomphe</text><text x="353" y="464" textLength="137">Sacré-Cœur</text>
          <text x="163" y="647" textLength="148">Grand Palais</text><text x="86" y="715" textLength="119">Tour Eiffel</text>
          <text x="268" y="731" textLength="172">Musée d'Orsay</text><text x="461" y="933" textLength="297">Les Catacombes de Paris</text>
          <text x="676" y="761" textLength="218">Place de la Bastille</text>
        </g>
        <g class="poi park">
          <text x="681" y="633" textLength="147">Cimetière du</text><text x="665" y="659" textLength="164">Père Lachaise</text>
          <g font-style="italic"><text x="402" y="810" textLength="140">Le Jardin du</text><text x="400" y="836" textLength="143">Luxembourg</text></g>
        </g>
        </g>
        <!-- streets -->
        <g class="st">
          <text transform="translate(280 460) rotate(51.500)" textLength="122">Bd Malesherbes</text>
          <text transform="translate(498 622) rotate(18)" textLength="105">Rue Réaumur</text>
          <path id="daum" fill="none" stroke="none" d="M688 812Q733 850 795 872"/><text><textPath href="#daum" textLength="108">Av Daumesnil</textPath></text>
          <text transform="translate(946 924) rotate(-30.500)" textLength="107">Av Daumesnil</text>
          <text transform="translate(575 960) rotate(79.500)" textLength="76">Av d'Italie</text>
        </g>
        <g class="st bd">
          <path id="peri" fill="none" stroke="none" d="M795 363L801 400 808 435 818 462 838 508"/><text><textPath href="#peri" textLength="138">Bd Périphérique</textPath></text>
          <text transform="translate(649 1074) rotate(-33.500)" textLength="138">Bd Périphérique</text>
        </g>
        <text class="water" x="52" y="403">S</text>
        <g class="ico">
          <g transform="translate(226.500 570)"><circle r="13" class="disc"/><path d="M-.8-9h1.600l1.200 10h2v3h1v4h-4v-2h-2v2h-4v-4h1v-3h2z"/></g>
          <g transform="translate(506 455)"><circle r="13" class="disc"/><path d="M-9 6v-5q2-4 4 0v5zM-3 6v-11q3-5 6 0v11h-2v-4h-2v4zM5 6v-5q2-4 4 0v5z"/></g>
          <use href="#museum" x="327" y="638"/><use href="#museum" x="409" y="692"/><use href="#castle" x="223" y="706"/><use href="#castle" x="444" y="925"/>
          <g transform="translate(658 752)"><circle r="13" class="disc"/><path d="M-7-9h2v2h2v2h-2v2h-2v-2h-2v-2h2zM-7-1h3v-3h4l1.500-2h4l1.500 2h2v10h-16z"/><circle cx="2.500" cy="1" r="3" fill="#fff"/></g>
          <g transform="translate(798 680)" fill="#6ead3c"><circle r="13" class="disc"/><path d="M-2-9l5 7h-2l3 5h-5v2h5v-4h2v4h2v2h-15v-2h4v-2h-5l3-5h-2z"/></g>
        </g>
        <!-- route shields -->
        <g class="dy">
          <rect x="125" y="329" width="34" height="22"/><rect x="274" y="310" width="44" height="22"/><rect x="215" y="359" width="44" height="22"/><rect x="74" y="424" width="54" height="22"/>
          <rect x="880" y="317" width="54" height="22"/><rect x="1019" y="383" width="54" height="22"/><rect x="878" y="453" width="44" height="22"/><rect x="1041" y="501" width="44" height="22"/>
          <rect x="910" y="539" width="55" height="22"/><rect x="1031" y="678" width="44" height="22"/><rect x="865" y="987" width="34" height="22"/><rect x="321" y="1110" width="44" height="22"/><rect x="381" y="1121" width="54" height="22"/><rect x="597" y="1109" width="34" height="22"/>
          <text x="142" y="346">D1</text><text x="296" y="327">D19</text><text x="237" y="376">D19</text><text x="101" y="441">D908</text><text x="907" y="334">D115</text><text x="1046" y="400">D116</text><text x="900" y="470">D20</text><text x="1064" y="518">D36</text><text x="938" y="556">D20A</text><text x="1053" y="695">D20</text><text x="882" y="1004">D6</text><text x="343" y="1127">D63</text><text x="614" y="1126">D7</text>
        </g>
        <g class="dr">
          <path d="M82 501h45v22h-45zM873 393h35v22h-35zM1059 542h35v22h-35zM958 715h56v22h-56zM841 1036h35v22h-35z"/><path fill="#6a9e3f" d="M894 849h43v22h-43z"/>
          <text x="104.500" y="518.500">N13</text><text x="890.500" y="410.500">N3</text><text x="1072" y="559.500">A</text><text x="986" y="732.500">N302</text><text x="858.500" y="1053.500">A4</text><text x="915.500" y="866.500">E15</text>
        </g>
        <!-- marker -->
        <linearGradient id="pin" x1="0" y1="0" x2="0" y2="1"><stop offset="0" stop-color="#fb7066"/><stop offset="1" stop-color="#ee3f3b"/></linearGradient>
        <path d="M559 721C557 700 538 684 538 663A21 21 0 0 1 580 663C580 684 561 700 559 721z" fill="url(#pin)" stroke="#b3312c" stroke-width="1.600"/><circle cx="559" cy="665" r="7.200" fill="#5d1110"/>
      </svg>

      <div class="types"><span class="on">Map</span><span class="sat">Satellite</span></div>
      <div class="side">
        <div class="peg"><svg width="24" height="40" viewBox="0 0 24 40"><path d="M6 13h12l3 13-3 2-1-4v14h-4.500v-9h-1v9H7V24l-1 4-3-2z" fill="#f9b32f" stroke="#9a6d2c"/><path d="M8 13.500h8L12 19z" fill="#e0771b"/><circle cx="12" cy="7" r="6.300" fill="#fbbc41" stroke="#94703c"/></svg></div>
        <div class="zoom"><svg width="56" height="110" viewBox="0 0 56 110"><path d="M18 27h21M28.500 16.500v21M18 83h21" stroke="#666" stroke-width="6"/><path d="M10 55h38" stroke="#e6e6e6" stroke-width="2"/></svg></div>
      </div>
      <div class="google"><span>G</span><span>o</span><span>o</span><span>g</span><span>l</span><span>e</span></div>
      <div class="legal"><span class="l1">Map data ©2016 Google</span><span class="l2">Terms of Use</span><span class="l3">Report a map error</span></div>
    </div>
  </section>

  <section class="card plans">
    <div class="top">
      <div class="day">
        <div class="date">Jan 1</div>
        <div class="nav">
          <button><svg width="80" height="62" viewBox="0 0 80 62"><path d="M46.500 16L36 26.700 46.500 37.500" fill="none" stroke="#000" stroke-width="3.800"/></svg></button>
          <button><svg width="80" height="62" viewBox="0 0 80 62"><path fill-rule="evenodd" d="M29 8h4v4h16v-4h4v4h2q4 0 4 4v28q0 4-4 4h-28q-4 0-4-4v-28q0-4 4-4h2zM27 22v22h28v-22zM31 26h4v4h-4zM39 26h4v4h-4zM47 26h4v4h-4z"/></svg></button>
          <button><svg width="80" height="62" viewBox="0 0 80 62"><path d="M35.500 16L46 26.700 35.500 37.500" fill="none" stroke="#000" stroke-width="3.800"/></svg></button>
        </div>
      </div>
      <button class="add">Add a new plan</button>
    </div>
    <div class="row head"><span>Time</span><span>Plans</span><span>Status</span></div>
    <div class="row"><span>8:00 AM</span><span>Go to the Lourve</span><span></span></div>
    <div class="row"><span>11:30 AM</span><span>Lunch</span><span></span></div>
  </section>
</main>
</body>
</html>
```
FILE: styles.css
```css
* { box-sizing: border-box; }
body { margin: 0; background: #fafafa; font-family: Roboto, sans-serif; color: #212121; overflow: hidden; }
button { font-family: inherit; color: inherit; border: 0; padding: 0; margin: 0; }
h1, h2 { margin: 0; font-weight: 700; }

.page { display: flex; gap: 32px; padding: 46px 24px 0 42px; height: 1152px; }
.card { background: #fff; border-radius: 4px; box-shadow: 0 4px 5px rgba(0,0,0,.14), 0 1px 8px rgba(0,0,0,.12); }
.left { width: 1032px; flex: none; }
.trip { height: 118px; display: flex; align-items: center; padding: 0 60px 0 23px; }
.trip h1 { font-size: 60px; line-height: 118px; white-space: nowrap; width: 456px; letter-spacing: 0; padding-top: 1px; }
.dates { font-size: 40px; line-height: 60px; width: 317px; white-space: nowrap; padding-top: 3px; }
.btn { background: #fff; border-radius: 4px; font-weight: 500; box-shadow: 0 3px 5px rgba(0,0,0,.16), 0 1px 7px rgba(0,0,0,.12); height: 72px; padding-top: 1px; }
.update { width: 176px; font-size: 28px; }
.lodging { height: 106px; margin-top: 20px; display: flex; align-items: center; justify-content: space-between; padding: 0 62px 2px 23px; }
.lodging h2 { font-size: 50px; padding-top: 2px; }
.hotel { width: 214px; font-size: 24px; padding-top: 0; }

.map { position: relative; width: 1032px; height: 800px; margin-top: 32px; overflow: hidden; background: #e9e8e7; border-radius: 3px; }
.canvas { display: block; font-family: Roboto, sans-serif; }
.t { fill: #f1e1ce; } .g { fill: #cae4a4; } .gg { fill: #d6e5d1; } .gg2 { fill: #d2e6b8; } .k { fill: #f6e8ef; } .r { fill: #d5d5d5; }
.vf { fill: #a4cdff; }
.rl { fill: none; stroke: #d0d0d0; stroke-width: 5; }
.d { fill: none; stroke: #aaa; stroke-width: 5; stroke-dasharray: 35 12; }
.v, .v2, .vt { fill: none; stroke: #a4cdff; stroke-width: 8; }
.v2 { stroke-width: 20; } .vt { stroke-width: 5; }
.w, .m, .b, .b1, .bridge { fill: none; stroke: #fff; stroke-width: 7; stroke-linejoin: round; stroke-linecap: round; }
.m { stroke-width: 12.500; } .b { stroke-width: 17; } .b1 { stroke-width: 5; } .bridge { stroke-width: 2.500; }
.river { fill: none; stroke: #a4cdff; stroke-linejoin: round; }
.yc, .yf, .ac, .af, .pc, .pf { fill: none; stroke-linejoin: round; stroke-linecap: round; }
.yc { stroke: #e2ca8d; stroke-width: 8.500; } .yf { stroke: #fee5ac; stroke-width: 6; }
.ac { stroke: #e9b272; stroke-width: 9; } .af { stroke: #fccf98; stroke-width: 6.500; }
.pc { stroke: #e0932a; stroke-width: 9.500; } .pf { stroke: #fdcf98; stroke-width: 6.500; }
.arr text, .lb, .town text, .st text, .poi text, .water { paint-order: stroke; stroke: rgba(240,240,239,.9); stroke-width: 5px; stroke-linejoin: round; }
.arr text { font-size: 29.500px; font-weight: 500; fill: #92815c; }
.paris-n { font-size: 23px; fill: #afa37f; font-weight: 500; }
.gren { font-size: 18px; font-weight: 500; fill: #92815c; }
.town { fill: #52452b; font-size: 28px; }
.paris { fill: #4b3f28; font-size: 38px; font-weight: 500; }
.st { fill: #777; font-size: 19px; } .bd { fill: #6e3c0a; font-size: 19.500px; }
.water { fill: #3f7fd0; font-size: 20px; }
.poi { fill: #3c3734; font-size: 26px; } .park { fill: #438017; }
.ico { fill: #8d6e63; } .disc { fill: #fff; stroke: #d9d9d9; }
.dy rect { fill: #fedb4b; stroke: #dfb436; stroke-width: 2; }
.dy text, .dr text { font-size: 18px; text-anchor: middle; fill: #222; }
.dr { fill: #d96264; } .dr text { fill: #fff; font-weight: 700; }

.types { position: absolute; left: 20px; top: 20px; display: flex; height: 58px; width: 188px; background: #fff; border-radius: 4px; box-shadow: 0 2px 6px rgba(0,0,0,.28); font-size: 22px; line-height: 57px; }
.types .on { width: 76px; padding-left: 15px; font-weight: 500; color: #000; border-right: 1px solid #e2e2e2; }
.types .sat { padding-left: 15px; color: #565656; }
.side { position: absolute; right: 20px; top: 566px; width: 56px; display: flex; flex-direction: column; gap: 20px; }
.peg, .zoom { background: #fff; border-radius: 4px; box-shadow: 0 2px 6px rgba(0,0,0,.25); }
.peg { height: 56px; display: flex; justify-content: center; align-items: center; padding-bottom: 4px; }
.zoom { height: 110px; } .zoom svg { display: block; }
.google { position: absolute; left: 12px; top: 747px; font: 400 40px/48px Lato, sans-serif; -webkit-text-stroke: 1px; letter-spacing: -.3px; text-shadow: 0 0 3px #fff, 0 0 3px #fff, 0 0 4px #fff; }
.google span:nth-child(1), .google span:nth-child(4) { color: #4285f4; }
.google span:nth-child(2), .google span:nth-child(6) { color: #ea4335; }
.google span:nth-child(3) { color: #fbbc05; } .google span:nth-child(5) { color: #34a853; }
.legal { position: absolute; right: 0; bottom: 0; width: 574px; height: 28px; display: flex; padding-left: 11px; background: linear-gradient(90deg, rgba(245,245,245,0), rgba(245,245,245,.75) 30px); font-size: 20px; line-height: 26px; color: #444; white-space: nowrap; -webkit-text-stroke: .3px; }
.l1 { width: 241px; } .l2 { width: 144px; }

.plans { flex: 1; height: 1140px; }
.top { display: flex; height: 218px; }
.day { width: 240px; margin-left: 22px; }
.date { height: 130px; line-height: 131px; padding-left: 47px; font-size: 60px; color: #800006; }
.nav { display: flex; }
.nav button { width: 80px; height: 62px; border: 2px solid #adadad; background: linear-gradient(#e2e2e2, #f9f9f9); overflow: hidden; }
.nav svg { display: block; margin: -2px; }
.add { width: 426px; height: 94px; margin: 40px 0 0 262px; border-radius: 8px; background: #4d6fb5; color: #fff; font-size: 40px; letter-spacing: -.4px; padding-top: 2px; }
.row { display: grid; grid-template-columns: 266px 533px 1fr; padding-left: 47px; height: 102px; line-height: 98px; font-size: 26px; border-bottom: 2px solid #e0e0e0; }
.head { color: #9e9e9e; font-size: 24px; line-height: 85px; }
```
